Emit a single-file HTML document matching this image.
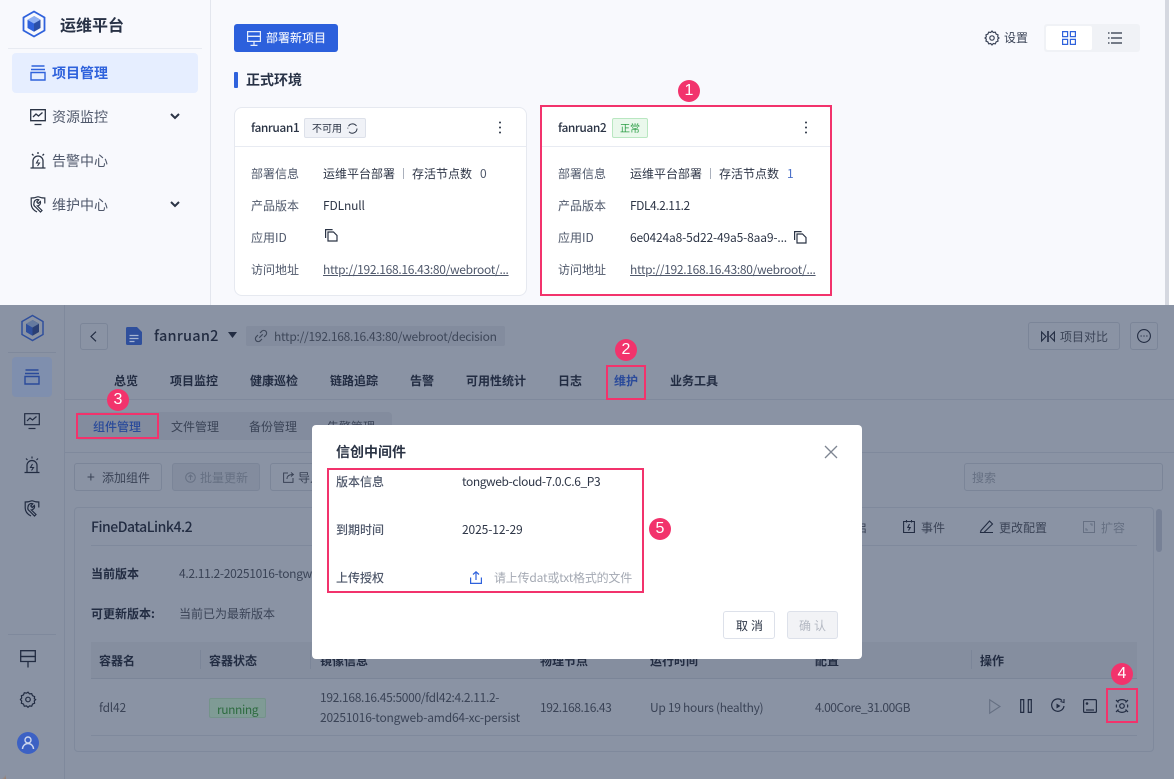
<!DOCTYPE html>
<html lang="zh"><head><meta charset="utf-8"><title>运维平台</title>
<style>
html,body{margin:0;padding:0;width:1174px;height:779px;overflow:hidden;background:#fff}
body{position:relative;font-family:"Noto Sans CJK SC","Liberation Sans",sans-serif;font-size:12px;color:#2b3445}
.t{position:absolute;white-space:nowrap;line-height:20px;margin-top:1px}
.t[style*="font-size"]{margin-top:0}
.b{position:absolute;box-sizing:border-box}
svg{position:absolute;overflow:visible}
.r{position:absolute;box-sizing:border-box;border:2px solid #f2336c}
.n{position:absolute;border-radius:50%;background:#f2336c;color:#fff;text-align:center;font-family:"Liberation Sans",sans-serif;font-size:16px}
.l{color:#4f586b}.v{color:#2e3647}
.d{color:#222c42}.g{color:#3a4356}
.h{font-weight:700;color:#222c42}
</style></head><body>

<!-- TOP WINDOW -->
<div class="b" style="left:0;top:0;width:1165px;height:305px;background:#f8f9fd"></div>
<div class="b" style="left:1165px;top:0;width:4px;height:305px;background:#d5d8e0"></div>
<div class="b" style="left:210px;top:0;width:1px;height:305px;background:#e3e6ee"></div>
<div class="b" style="left:8px;top:48px;width:194px;height:1px;background:#e8ebf2"></div>

<svg style="left:21px;top:10px" width="26" height="28" viewBox="0 0 24 28"><path d="M12 1.500 22.500 7.500V20.500L12 26.500 1.500 20.500V7.500Z" fill="none" stroke="#2f62dc" stroke-width="1.800"/><path d="M12 6 18.500 9.700V18L12 21.800Z" fill="#2a4fa8"/><path d="M12 6 5.500 9.700 12 13.500 18.500 9.700Z" fill="#8fb0f2"/><path d="M5.500 9.700V18L12 21.800V13.500Z" fill="#2f62dc"/></svg>
<div class="t" style="left:60px;top:14px;font-size:16px;font-weight:700;color:#283246">运维平台</div>

<div class="b" style="left:12px;top:53px;width:186px;height:40px;background:#e6eeff;border-radius:4px"></div>
<svg style="left:30px;top:65px" width="16" height="16" viewBox="0 0 16 16" fill="none" stroke="#2f62dc" stroke-width="1.400"><path d="M1.500 1h13M1 4.500h14"/><path d="M1 7.500h14v7.500H1z"/></svg>
<div class="t" style="left:52px;top:63px;font-size:14px;font-weight:700;color:#2f62dc">项目管理</div>

<svg style="left:30px;top:109px" width="16" height="17" viewBox="0 0 16 17" fill="none" stroke="#2b3445" stroke-width="1.300"><path d="M.7.700h14.600v11H.7z"/><path d="M3 8l3-3 2.500 2L12.500 3.500"/><path d="M4.500 15.500h7"/></svg>
<div class="t l" style="left:52px;top:107px;font-size:14px">资源监控</div>
<svg style="left:170px;top:113px" width="10" height="7" viewBox="0 0 10 7" fill="none" stroke="#2b3445" stroke-width="2"><path d="M1 1l4 4 4-4"/></svg>

<svg style="left:30px;top:152px" width="16" height="17" viewBox="0 0 16 17" fill="none" stroke="#2b3445" stroke-width="1.300"><path d="M.5 16h15M3 16V9a5 5 0 0 1 10 0v7"/><path d="M8.500 7.500 6.500 11h3L7.500 14" stroke-width="1.100"/><path d="M8 0v2M2 2l1.500 1.500M14 2l-1.500 1.500"/></svg>
<div class="t l" style="left:52px;top:151px;font-size:14px">告警中心</div>

<svg style="left:30px;top:196px" width="16" height="17" viewBox="0 0 16 17" fill="none" stroke="#2b3445" stroke-width="1.200"><path d="M8 .700C10 1.500 12.500 2 14.800 2V7.500"/><path d="M8 .700C6 1.500 3.500 2 1.200 2V8C1.200 12 4 14.500 7 16"/><path d="M4 7a3.500 3.500 0 0 1 4.800-3.200L6.800 6l1.400 1.500 2.200-2a3.500 3.500 0 0 1-3 4.500L12 14.500l-1.500 1.500-5-5A3.500 3.500 0 0 1 4 7z"/></svg>
<div class="t l" style="left:52px;top:195px;font-size:14px">维护中心</div>
<svg style="left:170px;top:201px" width="10" height="7" viewBox="0 0 10 7" fill="none" stroke="#2b3445" stroke-width="2"><path d="M1 1l4 4 4-4"/></svg>

<div class="b" style="left:234px;top:24px;width:104px;height:28px;background:#2c60dc;border-radius:3px"></div>
<svg style="left:247px;top:31px" width="14" height="15" viewBox="0 0 14 15" fill="none" stroke="#e6edfc" stroke-width="1.200"><path d="M.6.600h12.800v4.800H.6z"/><path d="M.6 5.400h12.800v5H.6z"/><path d="M7 10.400v4M3.500 14.400h7"/></svg>
<div class="t" style="left:266px;top:27px;color:#e8eefc;font-weight:500">部署新项目</div>

<div class="b" style="left:234px;top:72px;width:4px;height:16px;background:#2f62dc;border-radius:1px"></div>
<div class="t" style="left:246px;top:70px;font-size:14px;font-weight:700;color:#283246">正式环境</div>

<svg style="left:984px;top:30px" width="16" height="16" viewBox="0 0 16 16" fill="none" stroke="#3a4356" stroke-width="1.200"><path d="M8 1l1.300 1.500 2-.3.800 1.900 1.900.8-.3 2L15 8l-1.300 1.100.3 2-1.900.8-.8 1.900-2-.3L8 15l-1.300-1.500-2 .3-.8-1.900-1.900-.8.3-2L1 8l1.300-1.100-.3-2 1.900-.8.8-1.900 2 .3z"/><circle cx="8" cy="8" r="2.200"/></svg>
<div class="t g" style="left:1004px;top:27px">设置</div>
<div class="b" style="left:1044px;top:24px;width:96px;height:28px;background:#f0f2f6;border-radius:3px"></div>
<div class="b" style="left:1046px;top:26px;width:46px;height:24px;background:#fff;border-radius:2px"></div>
<svg style="left:1062px;top:31px" width="14" height="14" viewBox="0 0 14 14" fill="none" stroke="#2f62dc" stroke-width="1.200"><path d="M.6.600h5v5h-5zM8.400.600h5v5h-5zM.6 8.400h5v5h-5zM8.400 8.400h5v5h-5z"/></svg>
<svg style="left:1108px;top:31px" width="14" height="14" viewBox="0 0 14 14" fill="none" stroke="#2b3445" stroke-width="1.200"><path d="M3 2h11M3 7h11M3 12h11M0 2h1.500M0 7h1.500M0 12h1.500"/></svg>

<!-- card 1 -->
<div class="b" style="left:234px;top:107px;width:293px;height:189px;background:#fff;border:1px solid #e6e9f0;border-radius:8px"></div>
<div class="b" style="left:235px;top:146px;width:291px;height:1px;background:#e8ebf2"></div>
<div class="t" style="left:251px;top:118px;font-size:12px;font-weight:500;letter-spacing:-.45px;color:#2b3445">fanruan1</div>
<div class="b" style="left:304px;top:118px;width:62px;height:20px;background:#f0f2f7;border:1px solid #dde1ea;border-radius:2px"></div>
<div class="t" style="left:312px;top:118px;font-size:10px;color:#2b3445">不可用</div>
<svg style="left:347px;top:123px" width="11" height="11" viewBox="0 0 11 11" fill="none" stroke="#2b3445" stroke-width="1"><path d="M1.500 3.200A4.700 4.700 0 0 1 9.500 3M10 5.500a4.700 4.700 0 0 1-8 3.300M.8 5.500l.1-.8"/></svg>
<svg style="left:498px;top:121px" width="4" height="13" viewBox="0 0 4 13" fill="#2b3445"><circle cx="2" cy="1.500" r="1"/><circle cx="2" cy="6.500" r="1"/><circle cx="2" cy="11.500" r="1"/></svg>
<div class="t l" style="left:251px;top:163px">部署信息</div>
<div class="t v" style="left:323px;top:163px">运维平台部署</div>
<div class="b" style="left:403px;top:168px;width:1px;height:11px;background:#aab0bc"></div>
<div class="t v" style="left:412px;top:163px">存活节点数</div>
<div class="t l" style="left:480px;top:163px">0</div>
<div class="t l" style="left:251px;top:195px">产品版本</div>
<div class="t v" style="left:323px;top:195px;letter-spacing:-.15px">FDLnull</div>
<div class="t l" style="left:251px;top:227px">应用ID</div>
<svg style="left:325px;top:229px" width="13" height="13" viewBox="0 0 13 13" fill="none" stroke="#2b3445" stroke-width="1.200"><path d="M.6 9V.600h7"/><path d="M3 3h5.500l3.500 3.500V12H3z"/></svg>
<div class="t l" style="left:251px;top:259px">访问地址</div>
<div class="t" style="left:323px;top:259px;text-decoration:underline;letter-spacing:-.3px;color:#4f586b">http://192.168.16.43:80/webroot/...</div>

<!-- card 2 -->
<div class="b" style="left:541px;top:107px;width:290px;height:189px;background:#fff;border-radius:6px"></div>
<div class="b" style="left:541px;top:146px;width:290px;height:1px;background:#e8ebf2"></div>
<div class="t" style="left:558px;top:118px;font-size:12px;font-weight:500;letter-spacing:-.45px;color:#2b3445">fanruan2</div>
<div class="b" style="left:612px;top:118px;width:36px;height:20px;background:#eaf8ec;border:1px solid #b9e7c1;border-radius:2px"></div>
<div class="t" style="left:620px;top:118px;font-size:10px;color:#2a9d44">正常</div>
<svg style="left:804px;top:121px" width="4" height="13" viewBox="0 0 4 13" fill="#2b3445"><circle cx="2" cy="1.500" r="1"/><circle cx="2" cy="6.500" r="1"/><circle cx="2" cy="11.500" r="1"/></svg>
<div class="t l" style="left:558px;top:163px">部署信息</div>
<div class="t v" style="left:630px;top:163px">运维平台部署</div>
<div class="b" style="left:710px;top:168px;width:1px;height:11px;background:#aab0bc"></div>
<div class="t v" style="left:719px;top:163px">存活节点数</div>
<div class="t" style="left:787px;top:163px;color:#4a70c8">1</div>
<div class="t l" style="left:558px;top:195px">产品版本</div>
<div class="t v" style="left:630px;top:195px;letter-spacing:-.45px">FDL4.2.11.2</div>
<div class="t l" style="left:558px;top:227px">应用ID</div>
<div class="t v" style="left:630px;top:227px;letter-spacing:-.15px">6e0424a8-5d22-49a5-8aa9-...</div>
<svg style="left:794px;top:231px" width="13" height="13" viewBox="0 0 13 13" fill="none" stroke="#2b3445" stroke-width="1.200"><path d="M.6 9V.600h7"/><path d="M3 3h5.500l3.500 3.500V12H3z"/></svg>
<div class="t l" style="left:558px;top:259px">访问地址</div>
<div class="t" style="left:630px;top:259px;text-decoration:underline;letter-spacing:-.3px;color:#4f586b">http://192.168.16.43:80/webroot/...</div>
<div class="r" style="left:540px;top:105px;width:292px;height:191px"></div>
<div class="n" style="left:678px;top:80px;width:22px;height:22px;line-height:22px">1</div>

<!-- BOTTOM WINDOW (dimmed) -->
<div class="b" style="left:0;top:305px;width:1174px;height:474px;background:#8a93a4"></div>
<div class="b" style="left:0;top:773px;width:6px;height:6px;background:linear-gradient(135deg,#8a93a4 60%,#a07a60 100%)"></div>
<div class="b" style="left:64px;top:305px;width:1px;height:474px;background:#7f899c"></div>
<div class="b" style="left:8px;top:352px;width:48px;height:1px;background:#7f899c"></div>
<svg style="left:20px;top:314px" width="25" height="28" viewBox="0 0 24 28"><path d="M12 1.500 22.500 7.500V20.500L12 26.500 1.500 20.500V7.500Z" fill="none" stroke="#2f4f9c" stroke-width="1.500"/><path d="M12 6 18.500 9.700V18L12 21.800Z" fill="#2a3f74"/><path d="M12 6 5.500 9.700 12 13.500 18.500 9.700Z" fill="#657a9f"/><path d="M5.500 9.700V18L12 21.800V13.500Z" fill="#2f4f9c"/></svg>
<div class="b" style="left:12px;top:357px;width:40px;height:40px;background:#7f8fae;border-radius:4px"></div>
<svg style="left:24px;top:369px" width="16" height="16" viewBox="0 0 16 16" fill="none" stroke="#2a4a9a" stroke-width="1.400"><path d="M1.500 1h13M1 4.500h14"/><path d="M1 7.500h14v7.500H1z"/></svg>
<svg style="left:24px;top:413px" width="16" height="17" viewBox="0 0 16 17" fill="none" stroke="#222c42" stroke-width="1.200"><path d="M.7.700h14.600v11H.7z"/><path d="M3 8l3-3 2.500 2L12.500 3.500"/><path d="M4.500 15.500h7"/></svg>
<svg style="left:24px;top:456px" width="16" height="18" viewBox="0 0 16 17" fill="none" stroke="#222c42" stroke-width="1.200"><path d="M.5 16h15M3 16V9a5 5 0 0 1 10 0v7"/><path d="M8.500 7.500 6.500 11h3L7.500 14" stroke-width="1.100"/><path d="M8 0v2M2 2l1.500 1.500M14 2l-1.500 1.500"/></svg>
<svg style="left:24px;top:500px" width="16" height="17" viewBox="0 0 16 17" fill="none" stroke="#222c42" stroke-width="1.200"><path d="M8 .700C10 1.500 12.500 2 14.800 2V7.500"/><path d="M8 .700C6 1.500 3.500 2 1.200 2V8C1.200 12 4 14.500 7 16"/><path d="M4 7a3.500 3.500 0 0 1 4.800-3.200L6.800 6l1.400 1.500 2.200-2a3.500 3.500 0 0 1-3 4.500L12 14.500l-1.500 1.500-5-5A3.500 3.500 0 0 1 4 7z"/></svg>
<div class="b" style="left:8px;top:634px;width:48px;height:1px;background:#7f899c"></div>
<svg style="left:20px;top:650px" width="16" height="18" viewBox="0 0 16 18" fill="none" stroke="#222c42" stroke-width="1.300"><path d="M.7.700h14.600v5.800H.7z"/><path d="M.7 6.500h14.600v5H.7z"/><path d="M8 11.500v6"/></svg>
<svg style="left:20px;top:691px" width="16" height="17" viewBox="0 0 16 16" fill="none" stroke="#222c42" stroke-width="1.200"><path d="M8 .700l1.500 1.700 2.200-.3.800 2.100 2.100.9-.3 2.200L15.600 8l-1.300 1.500.3 2.200-2.100.9-.8 2.100-2.200-.3L8 15.800l-1.500-1.400-2.200.3-.8-2.100-2.100-.9.3-2.200L.4 8l1.300-1.500-.3-2.200 2.100-.9.800-2.100 2.200.3z"/><circle cx="8" cy="8" r="2.300"/></svg>
<div class="b" style="left:17px;top:731.500px;width:22px;height:22px;background:#3c61c4;border-radius:50%"></div>
<svg style="left:17px;top:731.500px" width="22" height="22" viewBox="0 0 22 22" fill="none" stroke="#cdd7ee" stroke-width="1.400"><circle cx="11" cy="8" r="3"/><path d="M5.500 17a5.500 5.500 0 0 1 11 0"/></svg>

<div class="b" style="left:80px;top:323px;width:28px;height:27px;border:1px solid #7b8598;border-radius:3px"></div>
<svg style="left:90px;top:331px" width="7" height="11" viewBox="0 0 7 11" fill="none" stroke="#222c42" stroke-width="1.200"><path d="M6 .700 1 5.500 6 10.300"/></svg>
<svg style="left:126px;top:327px" width="16" height="18" viewBox="0 0 16 18"><path d="M1.500 0H11l5 5v11.500a1.500 1.500 0 0 1-1.500 1.500h-13A1.500 1.500 0 0 1 0 16.500v-15A1.500 1.500 0 0 1 1.500 0z" fill="#2f4f9c"/><path d="M3.500 8.500h9M3.500 11.500h9M3.500 14.500h5" stroke="#a6b4d2" stroke-width="1.200"/></svg>
<div class="t" style="left:154px;top:326px;font-size:14.500px;font-weight:500;letter-spacing:.25px;color:#222c42">fanruan2</div>
<svg style="left:228px;top:332px" width="9" height="6" viewBox="0 0 9 6" fill="#222c42"><path d="M0 0h9L4.500 6z"/></svg>
<div class="b" style="left:246px;top:326px;width:259px;height:20px;background:#838c9e;border-radius:2px"></div>
<svg style="left:255px;top:330px" width="12" height="12" viewBox="0 0 12 12" fill="none" stroke="#3e4759" stroke-width="1.100"><path d="M5 3l1.800-1.800a2.800 2.800 0 0 1 4 4L9 7"/><path d="M7 9l-1.800 1.800a2.800 2.800 0 0 1-4-4L3 5"/><path d="M4.300 7.700l3.400-3.400"/></svg>
<div class="t" style="left:274px;top:326px;letter-spacing:-.25px;color:#3e4759">http://192.168.16.43:80/webroot/decision</div>

<div class="b" style="left:1028px;top:322px;width:92px;height:28px;border:1px solid #7b8598;border-radius:3px"></div>
<svg style="left:1041px;top:331px" width="14" height="11" viewBox="0 0 14 11" fill="none" stroke="#222c42" stroke-width="1.100"><path d="M.6 1v9L5 5.500zM13.400 1v9L9 5.500z"/><path d="M7 0v11" stroke-width="1.600"/></svg>
<div class="t g" style="left:1060px;top:326px">项目对比</div>
<div class="b" style="left:1130px;top:322px;width:28px;height:28px;border:1px solid #7b8598;border-radius:3px"></div>
<svg style="left:1137px;top:329px" width="14" height="14" viewBox="0 0 14 14" fill="none" stroke="#222c42" stroke-width="1.100"><circle cx="7" cy="7" r="6.400"/><path d="M3.600 7h1M6.500 7h1M9.400 7h1" stroke-width="1.300"/></svg>

<div class="t h" style="left:114px;top:370px">总览</div>
<div class="t h" style="left:170px;top:370px">项目监控</div>
<div class="t h" style="left:250px;top:370px">健康巡检</div>
<div class="t h" style="left:330px;top:370px">链路追踪</div>
<div class="t h" style="left:410px;top:370px">告警</div>
<div class="t h" style="left:466px;top:370px">可用性统计</div>
<div class="t h" style="left:558px;top:370px">日志</div>
<div class="t" style="left:614px;top:370px;font-weight:700;color:#2a4a9a">维护</div>
<div class="t h" style="left:670px;top:370px">业务工具</div>
<div class="b" style="left:65px;top:399px;width:1109px;height:1px;background:#7f899c"></div>

<div class="b" style="left:76px;top:412px;width:316px;height:28px;background:#838c9e;border-radius:4px"></div>
<div class="t" style="left:93px;top:416px;font-weight:500;color:#2a4a9a">组件管理</div>
<div class="t g" style="left:171px;top:416px">文件管理</div>
<div class="t g" style="left:249px;top:416px">备份管理</div>
<div class="t g" style="left:327px;top:416px">告警管理</div>
<div class="b" style="left:65px;top:452px;width:1109px;height:1px;background:#7f899c"></div>

<div class="b" style="left:74px;top:463px;width:88px;height:28px;border:1px solid #7b8598;border-radius:3px"></div>
<div class="t g" style="left:87px;top:467px;font-size:14px">+</div>
<div class="t g" style="left:102px;top:467px">添加组件</div>
<div class="b" style="left:172px;top:463px;width:88px;height:28px;background:#838c9e;border:1px solid #7b8598;border-radius:3px"></div>
<svg style="left:185px;top:472px" width="11" height="11" viewBox="0 0 11 11" fill="none" stroke="#667083" stroke-width="1"><circle cx="5.500" cy="5.500" r="4.800"/><path d="M5.500 8V3.500M3.500 5l2-2 2 2"/></svg>
<div class="t" style="left:200px;top:467px;color:#667083">批量更新</div>
<div class="b" style="left:270px;top:463px;width:88px;height:28px;border:1px solid #7b8598;border-radius:3px"></div>
<svg style="left:283px;top:472px" width="11" height="11" viewBox="0 0 11 11" fill="none" stroke="#3a4356" stroke-width="1"><path d="M5 1H.6v9.400H10V6M4 7c0-3 2-4.500 6-4.500M8 .5l2.400 2L8 4.500"/></svg>
<div class="t g" style="left:298px;top:467px">导入</div>
<div class="b" style="left:964px;top:463px;width:199px;height:28px;border:1px solid #7b8598;border-radius:3px"></div>
<div class="t" style="left:972px;top:467px;color:#667083">搜索</div>

<div class="b" style="left:74px;top:507px;width:1080px;height:245px;border:1px solid #7f899c;border-radius:4px"></div>
<div class="b" style="left:1156px;top:509px;width:6px;height:43px;background:#778196;border-radius:3px"></div>
<div class="t" style="left:91px;top:517px;font-size:14px;font-weight:500;letter-spacing:-.47px;color:#222c42">FineDataLink4.2</div>
<div class="b" style="left:91px;top:545px;width:1046px;height:1px;background:#7f899c"></div>
<div class="t g" style="left:843px;top:517px">重启</div>
<svg style="left:903px;top:520px" width="12" height="13" viewBox="0 0 12 13" fill="none" stroke="#222c42" stroke-width="1.100"><path d="M.6 1.500h10.800v11H.6zM3.500 0v2.500M8.500 0v2.500"/><path d="M6.500 4 4.800 7.500h2.400L5.500 10.500"/></svg>
<div class="t g" style="left:921px;top:517px">事件</div>
<svg style="left:980px;top:520px" width="14" height="13" viewBox="0 0 14 13" fill="none" stroke="#222c42" stroke-width="1.100"><path d="M1 10.500 9.500 1l3 3L4 12.500H.5zM0 12.500h13"/></svg>
<div class="t g" style="left:999px;top:517px">更改配置</div>
<svg style="left:1083px;top:521px" width="12" height="12" viewBox="0 0 12 12" fill="none" stroke="#667083" stroke-width="1"><path d="M.5.500h11v11H.5zM7 3h2v2M3 7v2h2"/></svg>
<div class="t" style="left:1101px;top:517px;color:#667083">扩容</div>

<div class="t h" style="left:91px;top:563px">当前版本</div>
<div class="t g" style="left:179px;top:563px;letter-spacing:-.3px">4.2.11.2-20251016-tongweb-amd64-xc-persist</div>
<div class="t h" style="left:91px;top:603px">可更新版本:</div>
<div class="t g" style="left:179px;top:603px">当前已为最新版本</div>

<div class="b" style="left:91px;top:642px;width:1046px;height:37px;background:#858e9f;border-bottom:1px solid #7b8598"></div>
<div class="t h" style="left:99px;top:650px">容器名</div>
<div class="b" style="left:200px;top:650px;width:1px;height:19px;background:#7b8598"></div>
<div class="t h" style="left:209px;top:650px">容器状态</div>
<div class="b" style="left:310px;top:650px;width:1px;height:19px;background:#7b8598"></div>
<div class="t h" style="left:320px;top:650px">镜像信息</div>
<div class="t h" style="left:540px;top:650px">物理节点</div>
<div class="t h" style="left:650px;top:650px">运行时间</div>
<div class="t h" style="left:815px;top:650px">配置</div>
<div class="b" style="left:971px;top:650px;width:1px;height:19px;background:#7b8598"></div>
<div class="t h" style="left:980px;top:650px">操作</div>
<div class="b" style="left:91px;top:735px;width:1046px;height:1px;background:#7f899c"></div>

<div class="t g" style="left:99px;top:697px;letter-spacing:-.2px">fdl42</div>
<div class="b" style="left:209px;top:698px;width:57px;height:20px;background:#7f9b95;border:1px solid #74938a;border-radius:2px"></div>
<div class="t" style="left:217px;top:699px;letter-spacing:-.4px;color:#2d6b3f">running</div>
<div class="t g" style="left:320px;top:687px;letter-spacing:-.32px">192.168.16.45:5000/fdl42:4.2.11.2-</div>
<div class="t g" style="left:320px;top:707px;letter-spacing:-.2px">20251016-tongweb-amd64-xc-persist</div>
<div class="t g" style="left:540px;top:697px;letter-spacing:-.4px">192.168.16.43</div>
<div class="t g" style="left:650px;top:697px;letter-spacing:-.3px">Up 19 hours (healthy)</div>
<div class="t g" style="left:815px;top:697px;letter-spacing:-.45px">4.00Core_31.00GB</div>
<svg style="left:989px;top:699px" width="12" height="15" viewBox="0 0 12 15" fill="none" stroke="#667083" stroke-width="1.100"><path d="M.7.800v13.400L11 7.500z"/></svg>
<svg style="left:1020px;top:699px" width="12" height="14" viewBox="0 0 12 14" fill="none" stroke="#222c42" stroke-width="1.200"><path d="M.7.600h3v12.800h-3zM8.300.600h3v12.800h-3z"/></svg>
<svg style="left:1051px;top:699px" width="14" height="14" viewBox="0 0 14 14" fill="none" stroke="#222c42" stroke-width="1.200"><path d="M11 1.500A6.200 6.200 0 1 0 13 7"/><path d="M9.500 2.500 13 3.500 13 0" stroke-width="1.100"/><path d="M5.500 4.500v5L9.500 7z" fill="#222c42" stroke="none"/></svg>
<svg style="left:1083px;top:699px" width="14" height="14" viewBox="0 0 14 14" fill="none" stroke="#222c42" stroke-width="1.200"><rect x=".6" y=".6" width="12.800" height="12.800" rx="1.200"/><circle cx="4" cy="4.500" r="1.300" fill="#222c42" stroke="none"/><path d="M3 11h8"/></svg>
<svg style="left:1115px;top:699px" width="14" height="14" viewBox="0 0 14 14" fill="none" stroke="#222c42" stroke-width="1.200"><circle cx="7" cy="7" r="2.300"/><path d="M2 3a6.500 6.500 0 0 1 10 0M2 11a6.500 6.500 0 0 0 10 0M1 1l2.500 2.500M13 1l-2.500 2.500M1 13l2.500-2.500M13 13l-2.500-2.500M1.500 5.500a6 6 0 0 0 0 3M12.500 5.500a6 6 0 0 1 0 3"/></svg>

<div class="r" style="left:606px;top:365px;width:40px;height:35px"></div>
<div class="n" style="left:615px;top:339px;width:22px;height:22px;line-height:22px">2</div>
<div class="r" style="left:76px;top:413px;width:83px;height:26px"></div>
<div class="n" style="left:107px;top:389px;width:22px;height:22px;line-height:22px">3</div>
<div class="r" style="left:1106px;top:688px;width:32px;height:35px"></div>
<div class="n" style="left:1111px;top:663px;width:22px;height:22px;line-height:22px">4</div>

<!-- MODAL -->
<div class="b" style="left:312px;top:425px;width:550px;height:234px;background:#fff;border-radius:4px"></div>
<div class="t" style="left:336px;top:442px;font-size:14px;font-weight:700;color:#2b3445">信创中间件</div>
<svg style="left:824px;top:445px" width="14" height="14" viewBox="0 0 14 14" fill="none" stroke="#7e8592" stroke-width="1.300"><path d="M1 1l12 12M13 1 1 13"/></svg>
<div class="r" style="left:327px;top:468px;width:317px;height:125px"></div>
<div class="t l" style="left:336px;top:471px;font-weight:500">版本信息</div>
<div class="t v" style="left:462px;top:471px;letter-spacing:-.4px">tongweb-cloud-7.0.C.6_P3</div>
<div class="t l" style="left:336px;top:519px;font-weight:500">到期时间</div>
<div class="t v" style="left:462px;top:519px;letter-spacing:-.1px">2025-12-29</div>
<div class="t l" style="left:336px;top:567px;font-weight:500">上传授权</div>
<svg style="left:470px;top:571px" width="12" height="13" viewBox="0 0 12 13" fill="none" stroke="#2f62dc" stroke-width="1.200"><path d="M6 9V1M3 3.500 6 .8l3 2.700M.6 6.500v5.900h10.800V6.500"/></svg>
<div class="t" style="left:494px;top:567px;letter-spacing:-.2px;color:#a4a9b3">请上传dat或txt格式的文件</div>
<div class="n" style="left:649px;top:518px;width:22px;height:22px;line-height:22px">5</div>
<div class="b" style="left:723px;top:611px;width:52px;height:28px;border:1px solid #dde1ea;border-radius:3px"></div>
<div class="t" style="left:736px;top:615px;letter-spacing:3px;color:#2b3445">取消</div>
<div class="b" style="left:787px;top:611px;width:51px;height:28px;background:#f2f3f6;border:1px solid #dde1ea;border-radius:3px"></div>
<div class="t" style="left:799px;top:615px;letter-spacing:3px;color:#b3b8c2">确认</div>

</body></html>
